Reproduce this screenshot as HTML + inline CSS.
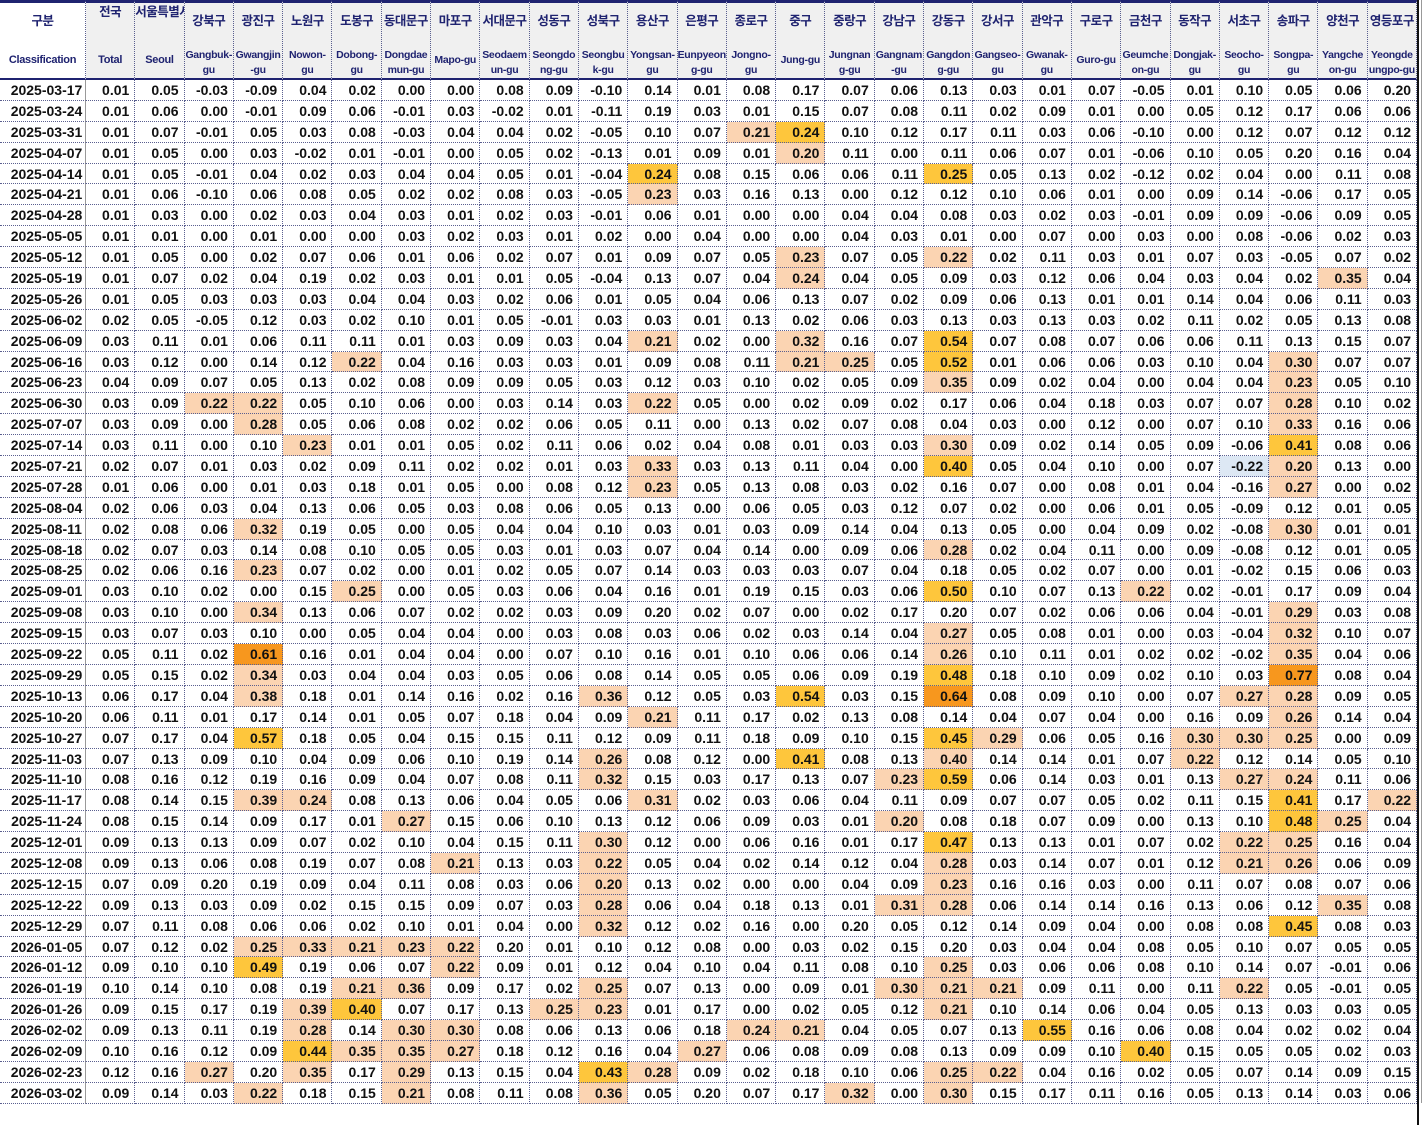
<!DOCTYPE html>
<html><head><meta charset="utf-8"><style>
*{box-sizing:border-box;margin:0;padding:0}
body{width:1424px;height:1103px;background:#fff;overflow:hidden;font-family:"Liberation Sans","Noto Sans CJK KR",sans-serif;position:relative}
.g{position:absolute;left:0;top:0;display:grid;grid-template-columns:86px repeat(27,49.3px);grid-template-rows:80px repeat(50,20.9px);border-right:2px solid #111}
.g>*{border-right:1px dotted #5a5f8f;border-bottom:1px dotted #5a5f8f;font-weight:bold;font-style:normal;text-decoration:none;font-size:14px;color:#111;line-height:20px;white-space:nowrap;overflow:hidden}
.g>i{text-align:right;padding-right:5px}
.g>b{text-align:center;padding-left:8px;border-right:1px solid #999}
.h{background:#f0f0f0;border-top:3px solid #1f2370!important;border-bottom:2px solid #1f2370!important;position:relative;color:#1f2370!important;text-align:center}
.h0{background:#fff}
.k{position:absolute;left:0;right:0;top:10px;font-size:12.5px;line-height:16px;letter-spacing:-0.5px}
.k2{top:1px}
.e{position:absolute;left:0;right:0;top:45px;font-size:10.5px;line-height:15px;letter-spacing:-0.3px}
.e1{top:50px}
.p{background:#fbd4b2}.y{background:#fec63c}.o{background:#f7971e}.bl{background:#dde8f4}
</style></head><body><div class="g">
<div class="h h0"><div class="k">구분</div><div class="e e1" style="font-size:11px">Classification</div></div>
<div class="h"><div class="k k2">전국</div><div class="e e1" style="font-size:11px">Total</div></div>
<div class="h"><div class="k k2">서울특별시</div><div class="e e1" style="font-size:11px">Seoul</div></div>
<div class="h"><div class="k">강북구</div><div class="e">Gangbuk-<br>gu</div></div>
<div class="h"><div class="k">광진구</div><div class="e">Gwangjin<br>-gu</div></div>
<div class="h"><div class="k">노원구</div><div class="e">Nowon-<br>gu</div></div>
<div class="h"><div class="k">도봉구</div><div class="e">Dobong-<br>gu</div></div>
<div class="h"><div class="k">동대문구</div><div class="e">Dongdae<br>mun-gu</div></div>
<div class="h"><div class="k">마포구</div><div class="e e1">Mapo-gu</div></div>
<div class="h"><div class="k">서대문구</div><div class="e">Seodaem<br>un-gu</div></div>
<div class="h"><div class="k">성동구</div><div class="e">Seongdo<br>ng-gu</div></div>
<div class="h"><div class="k">성북구</div><div class="e">Seongbu<br>k-gu</div></div>
<div class="h"><div class="k">용산구</div><div class="e">Yongsan-<br>gu</div></div>
<div class="h"><div class="k">은평구</div><div class="e">Eunpyeon<br>g-gu</div></div>
<div class="h"><div class="k">종로구</div><div class="e">Jongno-<br>gu</div></div>
<div class="h"><div class="k">중구</div><div class="e e1">Jung-gu</div></div>
<div class="h"><div class="k">중랑구</div><div class="e">Jungnan<br>g-gu</div></div>
<div class="h"><div class="k">강남구</div><div class="e">Gangnam<br>-gu</div></div>
<div class="h"><div class="k">강동구</div><div class="e">Gangdon<br>g-gu</div></div>
<div class="h"><div class="k">강서구</div><div class="e">Gangseo-<br>gu</div></div>
<div class="h"><div class="k">관악구</div><div class="e">Gwanak-<br>gu</div></div>
<div class="h"><div class="k">구로구</div><div class="e e1">Guro-gu</div></div>
<div class="h"><div class="k">금천구</div><div class="e">Geumche<br>on-gu</div></div>
<div class="h"><div class="k">동작구</div><div class="e">Dongjak-<br>gu</div></div>
<div class="h"><div class="k">서초구</div><div class="e">Seocho-<br>gu</div></div>
<div class="h"><div class="k">송파구</div><div class="e">Songpa-<br>gu</div></div>
<div class="h"><div class="k">양천구</div><div class="e">Yangche<br>on-gu</div></div>
<div class="h"><div class="k">영등포구</div><div class="e">Yeongde<br>ungpo-gu</div></div>

<b>2025-03-17</b><i>0.01</i><i>0.05</i><i>-0.03</i><i>-0.09</i><i>0.04</i><i>0.02</i><i>0.00</i><i>0.00</i><i>0.08</i><i>0.09</i><i>-0.10</i><i>0.14</i><i>0.01</i><i>0.08</i><i>0.17</i><i>0.07</i><i>0.06</i><i>0.13</i><i>0.03</i><i>0.01</i><i>0.07</i><i>-0.05</i><i>0.01</i><i>0.10</i><i>0.05</i><i>0.06</i><i>0.20</i>
<b>2025-03-24</b><i>0.01</i><i>0.06</i><i>0.00</i><i>-0.01</i><i>0.09</i><i>0.06</i><i>-0.01</i><i>0.03</i><i>-0.02</i><i>0.01</i><i>-0.11</i><i>0.19</i><i>0.03</i><i>0.01</i><i>0.15</i><i>0.07</i><i>0.08</i><i>0.11</i><i>0.02</i><i>0.09</i><i>0.01</i><i>0.00</i><i>0.05</i><i>0.12</i><i>0.17</i><i>0.06</i><i>0.06</i>
<b>2025-03-31</b><i>0.01</i><i>0.07</i><i>-0.01</i><i>0.05</i><i>0.03</i><i>0.08</i><i>-0.03</i><i>0.04</i><i>0.04</i><i>0.02</i><i>-0.05</i><i>0.10</i><i>0.07</i><i class="p">0.21</i><i class="y">0.24</i><i>0.10</i><i>0.12</i><i>0.17</i><i>0.11</i><i>0.03</i><i>0.06</i><i>-0.10</i><i>0.00</i><i>0.12</i><i>0.07</i><i>0.12</i><i>0.12</i>
<b>2025-04-07</b><i>0.01</i><i>0.05</i><i>0.00</i><i>0.03</i><i>-0.02</i><i>0.01</i><i>-0.01</i><i>0.00</i><i>0.05</i><i>0.02</i><i>-0.13</i><i>0.01</i><i>0.09</i><i>0.01</i><i class="p">0.20</i><i>0.11</i><i>0.00</i><i>0.11</i><i>0.06</i><i>0.07</i><i>0.01</i><i>-0.06</i><i>0.10</i><i>0.05</i><i>0.20</i><i>0.16</i><i>0.04</i>
<b>2025-04-14</b><i>0.01</i><i>0.05</i><i>-0.01</i><i>0.04</i><i>0.02</i><i>0.03</i><i>0.04</i><i>0.04</i><i>0.05</i><i>0.01</i><i>-0.04</i><i class="y">0.24</i><i>0.08</i><i>0.15</i><i>0.06</i><i>0.06</i><i>0.11</i><i class="y">0.25</i><i>0.05</i><i>0.13</i><i>0.02</i><i>-0.12</i><i>0.02</i><i>0.04</i><i>0.00</i><i>0.11</i><i>0.08</i>
<b>2025-04-21</b><i>0.01</i><i>0.06</i><i>-0.10</i><i>0.06</i><i>0.08</i><i>0.05</i><i>0.02</i><i>0.02</i><i>0.08</i><i>0.03</i><i>-0.05</i><i class="p">0.23</i><i>0.03</i><i>0.16</i><i>0.13</i><i>0.00</i><i>0.12</i><i>0.12</i><i>0.10</i><i>0.06</i><i>0.01</i><i>0.00</i><i>0.09</i><i>0.14</i><i>-0.06</i><i>0.17</i><i>0.05</i>
<b>2025-04-28</b><i>0.01</i><i>0.03</i><i>0.00</i><i>0.02</i><i>0.03</i><i>0.04</i><i>0.03</i><i>0.01</i><i>0.02</i><i>0.03</i><i>-0.01</i><i>0.06</i><i>0.01</i><i>0.00</i><i>0.00</i><i>0.04</i><i>0.04</i><i>0.08</i><i>0.03</i><i>0.02</i><i>0.03</i><i>-0.01</i><i>0.09</i><i>0.09</i><i>-0.06</i><i>0.09</i><i>0.05</i>
<b>2025-05-05</b><i>0.01</i><i>0.01</i><i>0.00</i><i>0.01</i><i>0.00</i><i>0.00</i><i>0.03</i><i>0.02</i><i>0.03</i><i>0.01</i><i>0.02</i><i>0.00</i><i>0.04</i><i>0.00</i><i>0.00</i><i>0.04</i><i>0.03</i><i>0.01</i><i>0.00</i><i>0.07</i><i>0.00</i><i>0.03</i><i>0.00</i><i>0.08</i><i>-0.06</i><i>0.02</i><i>0.03</i>
<b>2025-05-12</b><i>0.01</i><i>0.05</i><i>0.00</i><i>0.02</i><i>0.07</i><i>0.06</i><i>0.01</i><i>0.06</i><i>0.02</i><i>0.07</i><i>0.01</i><i>0.09</i><i>0.07</i><i>0.05</i><i class="p">0.23</i><i>0.07</i><i>0.05</i><i class="p">0.22</i><i>0.02</i><i>0.11</i><i>0.03</i><i>0.01</i><i>0.07</i><i>0.03</i><i>-0.05</i><i>0.07</i><i>0.02</i>
<b>2025-05-19</b><i>0.01</i><i>0.07</i><i>0.02</i><i>0.04</i><i>0.19</i><i>0.02</i><i>0.03</i><i>0.01</i><i>0.01</i><i>0.05</i><i>-0.04</i><i>0.13</i><i>0.07</i><i>0.04</i><i class="p">0.24</i><i>0.04</i><i>0.05</i><i>0.09</i><i>0.03</i><i>0.12</i><i>0.06</i><i>0.04</i><i>0.03</i><i>0.04</i><i>0.02</i><i class="p">0.35</i><i>0.04</i>
<b>2025-05-26</b><i>0.01</i><i>0.05</i><i>0.03</i><i>0.03</i><i>0.03</i><i>0.04</i><i>0.04</i><i>0.03</i><i>0.02</i><i>0.06</i><i>0.01</i><i>0.05</i><i>0.04</i><i>0.06</i><i>0.13</i><i>0.07</i><i>0.02</i><i>0.09</i><i>0.06</i><i>0.13</i><i>0.01</i><i>0.01</i><i>0.14</i><i>0.04</i><i>0.06</i><i>0.11</i><i>0.03</i>
<b>2025-06-02</b><i>0.02</i><i>0.05</i><i>-0.05</i><i>0.12</i><i>0.03</i><i>0.02</i><i>0.10</i><i>0.01</i><i>0.05</i><i>-0.01</i><i>0.03</i><i>0.03</i><i>0.01</i><i>0.13</i><i>0.02</i><i>0.06</i><i>0.03</i><i>0.13</i><i>0.03</i><i>0.13</i><i>0.03</i><i>0.02</i><i>0.11</i><i>0.02</i><i>0.05</i><i>0.13</i><i>0.08</i>
<b>2025-06-09</b><i>0.03</i><i>0.11</i><i>0.01</i><i>0.06</i><i>0.11</i><i>0.11</i><i>0.01</i><i>0.03</i><i>0.09</i><i>0.03</i><i>0.04</i><i class="p">0.21</i><i>0.02</i><i>0.00</i><i class="p">0.32</i><i>0.16</i><i>0.07</i><i class="y">0.54</i><i>0.07</i><i>0.08</i><i>0.07</i><i>0.06</i><i>0.06</i><i>0.11</i><i>0.13</i><i>0.15</i><i>0.07</i>
<b>2025-06-16</b><i>0.03</i><i>0.12</i><i>0.00</i><i>0.14</i><i>0.12</i><i class="p">0.22</i><i>0.04</i><i>0.16</i><i>0.03</i><i>0.03</i><i>0.01</i><i>0.09</i><i>0.08</i><i>0.11</i><i class="p">0.21</i><i class="p">0.25</i><i>0.05</i><i class="y">0.52</i><i>0.01</i><i>0.06</i><i>0.06</i><i>0.03</i><i>0.10</i><i>0.04</i><i class="p">0.30</i><i>0.07</i><i>0.07</i>
<b>2025-06-23</b><i>0.04</i><i>0.09</i><i>0.07</i><i>0.05</i><i>0.13</i><i>0.02</i><i>0.08</i><i>0.09</i><i>0.09</i><i>0.05</i><i>0.03</i><i>0.12</i><i>0.03</i><i>0.10</i><i>0.02</i><i>0.05</i><i>0.09</i><i class="p">0.35</i><i>0.09</i><i>0.02</i><i>0.04</i><i>0.00</i><i>0.04</i><i>0.04</i><i class="p">0.23</i><i>0.05</i><i>0.10</i>
<b>2025-06-30</b><i>0.03</i><i>0.09</i><i class="p">0.22</i><i class="p">0.22</i><i>0.05</i><i>0.10</i><i>0.06</i><i>0.00</i><i>0.03</i><i>0.14</i><i>0.03</i><i class="p">0.22</i><i>0.05</i><i>0.00</i><i>0.02</i><i>0.09</i><i>0.02</i><i>0.17</i><i>0.06</i><i>0.04</i><i>0.18</i><i>0.03</i><i>0.07</i><i>0.07</i><i class="p">0.28</i><i>0.10</i><i>0.02</i>
<b>2025-07-07</b><i>0.03</i><i>0.09</i><i>0.00</i><i class="p">0.28</i><i>0.05</i><i>0.06</i><i>0.08</i><i>0.02</i><i>0.02</i><i>0.06</i><i>0.05</i><i>0.11</i><i>0.00</i><i>0.13</i><i>0.02</i><i>0.07</i><i>0.08</i><i>0.04</i><i>0.03</i><i>0.00</i><i>0.12</i><i>0.00</i><i>0.07</i><i>0.10</i><i class="p">0.33</i><i>0.16</i><i>0.06</i>
<b>2025-07-14</b><i>0.03</i><i>0.11</i><i>0.00</i><i>0.10</i><i class="p">0.23</i><i>0.01</i><i>0.01</i><i>0.05</i><i>0.02</i><i>0.11</i><i>0.06</i><i>0.02</i><i>0.04</i><i>0.08</i><i>0.01</i><i>0.03</i><i>0.03</i><i class="p">0.30</i><i>0.09</i><i>0.02</i><i>0.14</i><i>0.05</i><i>0.09</i><i>-0.06</i><i class="y">0.41</i><i>0.08</i><i>0.06</i>
<b>2025-07-21</b><i>0.02</i><i>0.07</i><i>0.01</i><i>0.03</i><i>0.02</i><i>0.09</i><i>0.11</i><i>0.02</i><i>0.02</i><i>0.01</i><i>0.03</i><i class="p">0.33</i><i>0.03</i><i>0.13</i><i>0.11</i><i>0.04</i><i>0.00</i><i class="y">0.40</i><i>0.05</i><i>0.04</i><i>0.10</i><i>0.00</i><i>0.07</i><i class="bl">-0.22</i><i class="p">0.20</i><i>0.13</i><i>0.00</i>
<b>2025-07-28</b><i>0.01</i><i>0.06</i><i>0.00</i><i>0.01</i><i>0.03</i><i>0.18</i><i>0.01</i><i>0.05</i><i>0.00</i><i>0.08</i><i>0.12</i><i class="p">0.23</i><i>0.05</i><i>0.13</i><i>0.08</i><i>0.03</i><i>0.02</i><i>0.16</i><i>0.07</i><i>0.00</i><i>0.08</i><i>0.01</i><i>0.04</i><i>-0.16</i><i class="p">0.27</i><i>0.00</i><i>0.02</i>
<b>2025-08-04</b><i>0.02</i><i>0.06</i><i>0.03</i><i>0.04</i><i>0.13</i><i>0.06</i><i>0.05</i><i>0.03</i><i>0.08</i><i>0.06</i><i>0.05</i><i>0.13</i><i>0.00</i><i>0.06</i><i>0.05</i><i>0.03</i><i>0.12</i><i>0.07</i><i>0.02</i><i>0.00</i><i>0.06</i><i>0.01</i><i>0.05</i><i>-0.09</i><i>0.12</i><i>0.01</i><i>0.05</i>
<b>2025-08-11</b><i>0.02</i><i>0.08</i><i>0.06</i><i class="p">0.32</i><i>0.19</i><i>0.05</i><i>0.00</i><i>0.05</i><i>0.04</i><i>0.04</i><i>0.10</i><i>0.03</i><i>0.01</i><i>0.03</i><i>0.09</i><i>0.14</i><i>0.04</i><i>0.13</i><i>0.05</i><i>0.00</i><i>0.04</i><i>0.09</i><i>0.02</i><i>-0.08</i><i class="p">0.30</i><i>0.01</i><i>0.01</i>
<b>2025-08-18</b><i>0.02</i><i>0.07</i><i>0.03</i><i>0.14</i><i>0.08</i><i>0.10</i><i>0.05</i><i>0.05</i><i>0.03</i><i>0.01</i><i>0.03</i><i>0.07</i><i>0.04</i><i>0.14</i><i>0.00</i><i>0.09</i><i>0.06</i><i class="p">0.28</i><i>0.02</i><i>0.04</i><i>0.11</i><i>0.00</i><i>0.09</i><i>-0.08</i><i>0.12</i><i>0.01</i><i>0.05</i>
<b>2025-08-25</b><i>0.02</i><i>0.06</i><i>0.16</i><i class="p">0.23</i><i>0.07</i><i>0.02</i><i>0.00</i><i>0.01</i><i>0.02</i><i>0.05</i><i>0.07</i><i>0.14</i><i>0.03</i><i>0.03</i><i>0.03</i><i>0.07</i><i>0.04</i><i>0.18</i><i>0.05</i><i>0.02</i><i>0.07</i><i>0.00</i><i>0.01</i><i>-0.02</i><i>0.15</i><i>0.06</i><i>0.03</i>
<b>2025-09-01</b><i>0.03</i><i>0.10</i><i>0.02</i><i>0.00</i><i>0.15</i><i class="p">0.25</i><i>0.00</i><i>0.05</i><i>0.03</i><i>0.06</i><i>0.04</i><i>0.16</i><i>0.01</i><i>0.19</i><i>0.15</i><i>0.03</i><i>0.06</i><i class="y">0.50</i><i>0.10</i><i>0.07</i><i>0.13</i><i class="p">0.22</i><i>0.02</i><i>-0.01</i><i>0.17</i><i>0.09</i><i>0.04</i>
<b>2025-09-08</b><i>0.03</i><i>0.10</i><i>0.00</i><i class="p">0.34</i><i>0.13</i><i>0.06</i><i>0.07</i><i>0.02</i><i>0.02</i><i>0.03</i><i>0.09</i><i>0.20</i><i>0.02</i><i>0.07</i><i>0.00</i><i>0.02</i><i>0.17</i><i>0.20</i><i>0.07</i><i>0.02</i><i>0.06</i><i>0.06</i><i>0.04</i><i>-0.01</i><i class="p">0.29</i><i>0.03</i><i>0.08</i>
<b>2025-09-15</b><i>0.03</i><i>0.07</i><i>0.03</i><i>0.10</i><i>0.00</i><i>0.05</i><i>0.04</i><i>0.04</i><i>0.00</i><i>0.03</i><i>0.08</i><i>0.03</i><i>0.06</i><i>0.02</i><i>0.03</i><i>0.14</i><i>0.04</i><i class="p">0.27</i><i>0.05</i><i>0.08</i><i>0.01</i><i>0.00</i><i>0.03</i><i>-0.04</i><i class="p">0.32</i><i>0.10</i><i>0.07</i>
<b>2025-09-22</b><i>0.05</i><i>0.11</i><i>0.02</i><i class="o">0.61</i><i>0.16</i><i>0.01</i><i>0.04</i><i>0.04</i><i>0.00</i><i>0.07</i><i>0.10</i><i>0.16</i><i>0.01</i><i>0.10</i><i>0.06</i><i>0.06</i><i>0.14</i><i class="p">0.26</i><i>0.10</i><i>0.11</i><i>0.01</i><i>0.02</i><i>0.02</i><i>-0.02</i><i class="p">0.35</i><i>0.04</i><i>0.06</i>
<b>2025-09-29</b><i>0.05</i><i>0.15</i><i>0.02</i><i class="p">0.34</i><i>0.03</i><i>0.04</i><i>0.04</i><i>0.03</i><i>0.05</i><i>0.06</i><i>0.08</i><i>0.14</i><i>0.05</i><i>0.05</i><i>0.06</i><i>0.09</i><i>0.19</i><i class="y">0.48</i><i>0.18</i><i>0.10</i><i>0.09</i><i>0.02</i><i>0.10</i><i>0.03</i><i class="o">0.77</i><i>0.08</i><i>0.04</i>
<b>2025-10-13</b><i>0.06</i><i>0.17</i><i>0.04</i><i class="p">0.38</i><i>0.18</i><i>0.01</i><i>0.14</i><i>0.16</i><i>0.02</i><i>0.16</i><i class="p">0.36</i><i>0.12</i><i>0.05</i><i>0.03</i><i class="y">0.54</i><i>0.03</i><i>0.15</i><i class="o">0.64</i><i>0.08</i><i>0.09</i><i>0.10</i><i>0.00</i><i>0.07</i><i class="p">0.27</i><i class="p">0.28</i><i>0.09</i><i>0.05</i>
<b>2025-10-20</b><i>0.06</i><i>0.11</i><i>0.01</i><i>0.17</i><i>0.14</i><i>0.01</i><i>0.05</i><i>0.07</i><i>0.18</i><i>0.04</i><i>0.09</i><i class="p">0.21</i><i>0.11</i><i>0.17</i><i>0.02</i><i>0.13</i><i>0.08</i><i>0.14</i><i>0.04</i><i>0.07</i><i>0.04</i><i>0.00</i><i>0.16</i><i>0.09</i><i class="p">0.26</i><i>0.14</i><i>0.04</i>
<b>2025-10-27</b><i>0.07</i><i>0.17</i><i>0.04</i><i class="y">0.57</i><i>0.18</i><i>0.05</i><i>0.04</i><i>0.15</i><i>0.15</i><i>0.11</i><i>0.12</i><i>0.09</i><i>0.11</i><i>0.18</i><i>0.09</i><i>0.10</i><i>0.15</i><i class="y">0.45</i><i class="p">0.29</i><i>0.06</i><i>0.05</i><i>0.16</i><i class="p">0.30</i><i class="p">0.30</i><i class="p">0.25</i><i>0.00</i><i>0.09</i>
<b>2025-11-03</b><i>0.07</i><i>0.13</i><i>0.09</i><i>0.10</i><i>0.04</i><i>0.09</i><i>0.06</i><i>0.10</i><i>0.19</i><i>0.14</i><i class="p">0.26</i><i>0.08</i><i>0.12</i><i>0.00</i><i class="y">0.41</i><i>0.08</i><i>0.13</i><i class="p">0.40</i><i>0.14</i><i>0.14</i><i>0.01</i><i>0.07</i><i class="p">0.22</i><i>0.12</i><i>0.14</i><i>0.05</i><i>0.10</i>
<b>2025-11-10</b><i>0.08</i><i>0.16</i><i>0.12</i><i>0.19</i><i>0.16</i><i>0.09</i><i>0.04</i><i>0.07</i><i>0.08</i><i>0.11</i><i class="p">0.32</i><i>0.15</i><i>0.03</i><i>0.17</i><i>0.13</i><i>0.07</i><i class="p">0.23</i><i class="y">0.59</i><i>0.06</i><i>0.14</i><i>0.03</i><i>0.01</i><i>0.13</i><i class="p">0.27</i><i class="p">0.24</i><i>0.11</i><i>0.06</i>
<b>2025-11-17</b><i>0.08</i><i>0.14</i><i>0.15</i><i class="p">0.39</i><i class="p">0.24</i><i>0.08</i><i>0.13</i><i>0.06</i><i>0.04</i><i>0.05</i><i>0.06</i><i class="p">0.31</i><i>0.02</i><i>0.03</i><i>0.06</i><i>0.04</i><i>0.11</i><i>0.09</i><i>0.07</i><i>0.07</i><i>0.05</i><i>0.02</i><i>0.11</i><i>0.15</i><i class="y">0.41</i><i>0.17</i><i class="p">0.22</i>
<b>2025-11-24</b><i>0.08</i><i>0.15</i><i>0.14</i><i>0.09</i><i>0.17</i><i>0.01</i><i class="p">0.27</i><i>0.15</i><i>0.06</i><i>0.10</i><i>0.13</i><i>0.12</i><i>0.06</i><i>0.09</i><i>0.03</i><i>0.01</i><i class="p">0.20</i><i>0.08</i><i>0.18</i><i>0.07</i><i>0.09</i><i>0.00</i><i>0.13</i><i>0.10</i><i class="y">0.48</i><i class="p">0.25</i><i>0.04</i>
<b>2025-12-01</b><i>0.09</i><i>0.13</i><i>0.13</i><i>0.09</i><i>0.07</i><i>0.02</i><i>0.10</i><i>0.04</i><i>0.15</i><i>0.11</i><i class="p">0.30</i><i>0.12</i><i>0.00</i><i>0.06</i><i>0.16</i><i>0.01</i><i>0.17</i><i class="y">0.47</i><i>0.13</i><i>0.13</i><i>0.01</i><i>0.07</i><i>0.02</i><i class="p">0.22</i><i class="p">0.25</i><i>0.16</i><i>0.04</i>
<b>2025-12-08</b><i>0.09</i><i>0.13</i><i>0.06</i><i>0.08</i><i>0.19</i><i>0.07</i><i>0.08</i><i class="p">0.21</i><i>0.13</i><i>0.03</i><i class="p">0.22</i><i>0.05</i><i>0.04</i><i>0.02</i><i>0.14</i><i>0.12</i><i>0.04</i><i class="p">0.28</i><i>0.03</i><i>0.14</i><i>0.07</i><i>0.01</i><i>0.12</i><i class="p">0.21</i><i class="p">0.26</i><i>0.06</i><i>0.09</i>
<b>2025-12-15</b><i>0.07</i><i>0.09</i><i>0.20</i><i>0.19</i><i>0.09</i><i>0.04</i><i>0.11</i><i>0.08</i><i>0.03</i><i>0.06</i><i class="p">0.20</i><i>0.13</i><i>0.02</i><i>0.00</i><i>0.00</i><i>0.04</i><i>0.09</i><i class="p">0.23</i><i>0.16</i><i>0.16</i><i>0.03</i><i>0.00</i><i>0.11</i><i>0.07</i><i>0.08</i><i>0.07</i><i>0.06</i>
<b>2025-12-22</b><i>0.09</i><i>0.13</i><i>0.03</i><i>0.09</i><i>0.02</i><i>0.15</i><i>0.15</i><i>0.09</i><i>0.07</i><i>0.03</i><i class="p">0.28</i><i>0.06</i><i>0.04</i><i>0.18</i><i>0.13</i><i>0.01</i><i class="p">0.31</i><i class="p">0.28</i><i>0.06</i><i>0.14</i><i>0.14</i><i>0.16</i><i>0.13</i><i>0.06</i><i>0.12</i><i class="p">0.35</i><i>0.08</i>
<b>2025-12-29</b><i>0.07</i><i>0.11</i><i>0.08</i><i>0.06</i><i>0.06</i><i>0.02</i><i>0.10</i><i>0.01</i><i>0.04</i><i>0.00</i><i class="p">0.32</i><i>0.12</i><i>0.02</i><i>0.16</i><i>0.00</i><i>0.20</i><i>0.05</i><i>0.12</i><i>0.14</i><i>0.09</i><i>0.04</i><i>0.00</i><i>0.08</i><i>0.08</i><i class="y">0.45</i><i>0.08</i><i>0.03</i>
<b>2026-01-05</b><i>0.07</i><i>0.12</i><i>0.02</i><i class="p">0.25</i><i class="p">0.33</i><i class="p">0.21</i><i class="p">0.23</i><i class="p">0.22</i><i>0.20</i><i>0.01</i><i>0.10</i><i>0.12</i><i>0.08</i><i>0.00</i><i>0.03</i><i>0.02</i><i>0.15</i><i>0.20</i><i>0.03</i><i>0.04</i><i>0.04</i><i>0.08</i><i>0.05</i><i>0.10</i><i>0.07</i><i>0.05</i><i>0.05</i>
<b>2026-01-12</b><i>0.09</i><i>0.10</i><i>0.10</i><i class="y">0.49</i><i>0.19</i><i>0.06</i><i>0.07</i><i class="p">0.22</i><i>0.09</i><i>0.01</i><i>0.12</i><i>0.04</i><i>0.10</i><i>0.04</i><i>0.11</i><i>0.08</i><i>0.10</i><i class="p">0.25</i><i>0.03</i><i>0.06</i><i>0.06</i><i>0.08</i><i>0.10</i><i>0.14</i><i>0.07</i><i>-0.01</i><i>0.06</i>
<b>2026-01-19</b><i>0.10</i><i>0.14</i><i>0.10</i><i>0.08</i><i>0.19</i><i class="p">0.21</i><i class="p">0.36</i><i>0.09</i><i>0.17</i><i>0.02</i><i class="p">0.25</i><i>0.07</i><i>0.13</i><i>0.00</i><i>0.09</i><i>0.01</i><i class="p">0.30</i><i class="p">0.21</i><i class="p">0.21</i><i>0.09</i><i>0.11</i><i>0.00</i><i>0.11</i><i class="p">0.22</i><i>0.05</i><i>-0.01</i><i>0.05</i>
<b>2026-01-26</b><i>0.09</i><i>0.15</i><i>0.17</i><i>0.19</i><i class="p">0.39</i><i class="y">0.40</i><i>0.07</i><i>0.17</i><i>0.13</i><i class="p">0.25</i><i class="p">0.23</i><i>0.01</i><i>0.17</i><i>0.00</i><i>0.02</i><i>0.05</i><i>0.12</i><i class="p">0.21</i><i>0.10</i><i>0.14</i><i>0.06</i><i>0.04</i><i>0.05</i><i>0.13</i><i>0.03</i><i>0.03</i><i>0.05</i>
<b>2026-02-02</b><i>0.09</i><i>0.13</i><i>0.11</i><i>0.19</i><i class="p">0.28</i><i>0.14</i><i class="p">0.30</i><i class="p">0.30</i><i>0.08</i><i>0.06</i><i>0.13</i><i>0.06</i><i>0.18</i><i class="p">0.24</i><i class="p">0.21</i><i>0.04</i><i>0.05</i><i>0.07</i><i>0.13</i><i class="y">0.55</i><i>0.16</i><i>0.06</i><i>0.08</i><i>0.04</i><i>0.02</i><i>0.02</i><i>0.04</i>
<b>2026-02-09</b><i>0.10</i><i>0.16</i><i>0.12</i><i>0.09</i><i class="y">0.44</i><i class="p">0.35</i><i class="p">0.35</i><i class="p">0.27</i><i>0.18</i><i>0.12</i><i>0.16</i><i>0.04</i><i class="p">0.27</i><i>0.06</i><i>0.08</i><i>0.09</i><i>0.08</i><i>0.13</i><i>0.09</i><i>0.09</i><i>0.10</i><i class="y">0.40</i><i>0.15</i><i>0.05</i><i>0.05</i><i>0.02</i><i>0.03</i>
<b>2026-02-23</b><i>0.12</i><i>0.16</i><i class="p">0.27</i><i>0.20</i><i class="p">0.35</i><i>0.17</i><i class="p">0.29</i><i>0.13</i><i>0.15</i><i>0.04</i><i class="y">0.43</i><i class="p">0.28</i><i>0.09</i><i>0.02</i><i>0.18</i><i>0.10</i><i>0.06</i><i class="p">0.25</i><i class="p">0.22</i><i>0.04</i><i>0.16</i><i>0.02</i><i>0.05</i><i>0.07</i><i>0.14</i><i>0.09</i><i>0.15</i>
<b>2026-03-02</b><i>0.09</i><i>0.14</i><i>0.03</i><i class="p">0.22</i><i>0.18</i><i>0.15</i><i class="p">0.21</i><i>0.08</i><i>0.11</i><i>0.08</i><i class="p">0.36</i><i>0.05</i><i>0.20</i><i>0.07</i><i>0.17</i><i class="p">0.32</i><i>0.00</i><i class="p">0.30</i><i>0.15</i><i>0.17</i><i>0.11</i><i>0.16</i><i>0.05</i><i>0.13</i><i>0.14</i><i>0.03</i><i>0.06</i>
</div>
<div style="position:absolute;left:1421px;top:0;width:1px;height:1103px;background:#999"></div>
</body></html>
